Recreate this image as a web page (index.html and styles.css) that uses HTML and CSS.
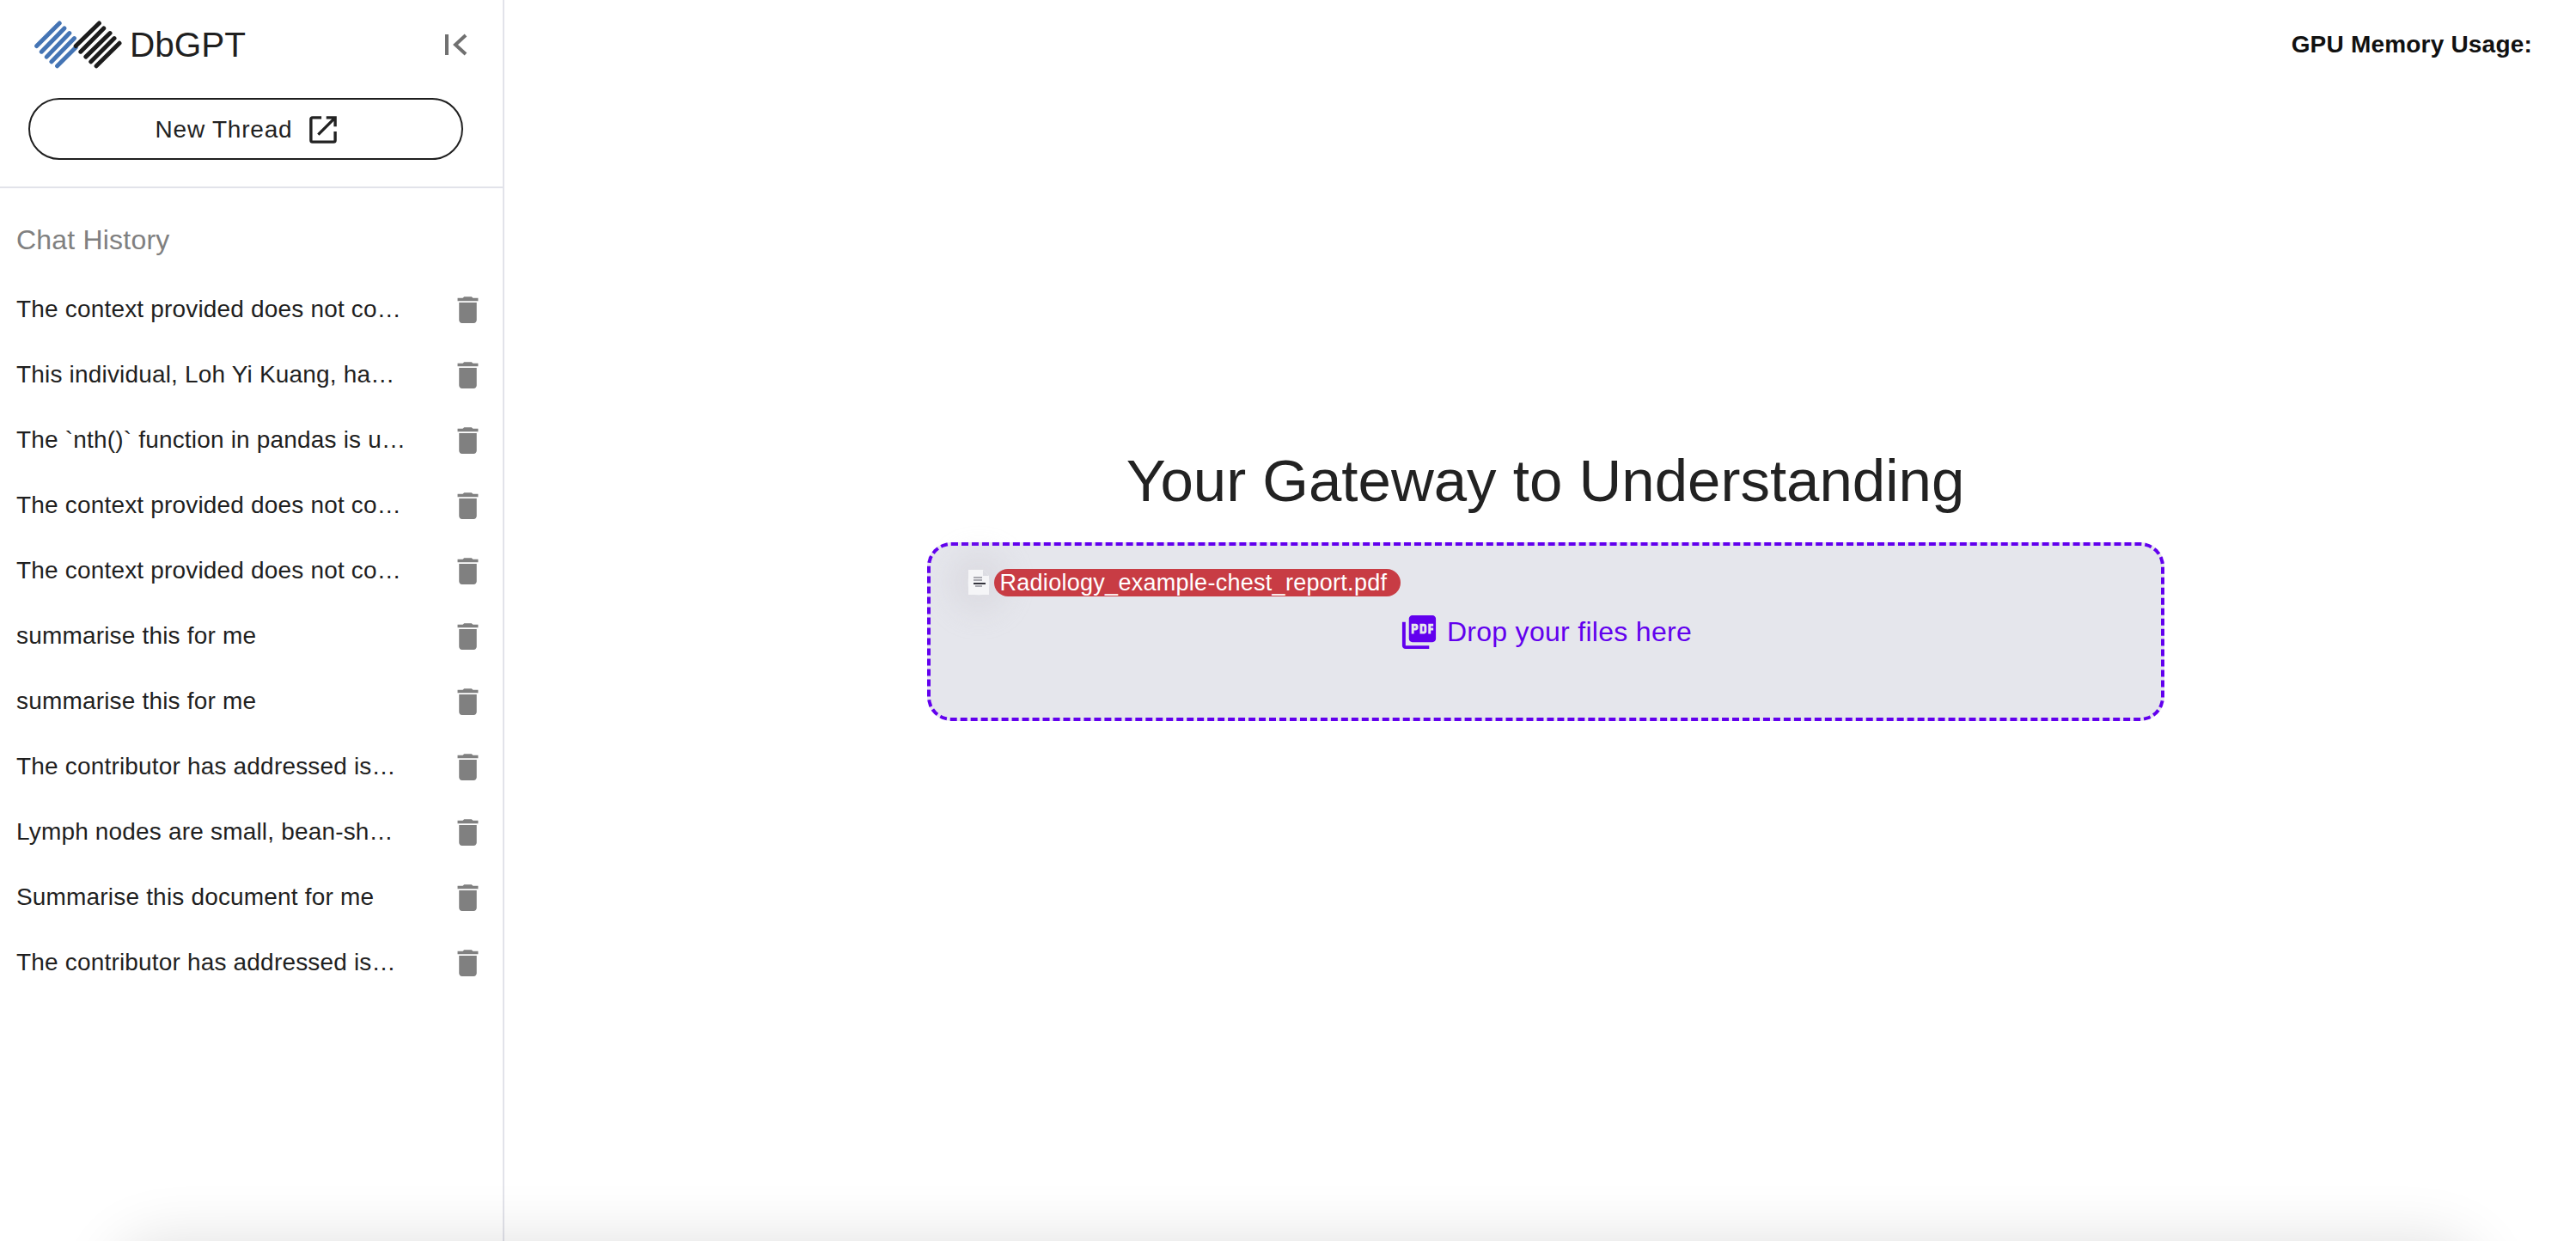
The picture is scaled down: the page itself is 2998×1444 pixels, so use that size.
FILE: index.html
```html
<!DOCTYPE html>
<html lang="en">
<head>
    <meta charset="UTF-8">
    <title>DbGPT</title>
    <link rel="stylesheet" href="styles.css">
</head>
<body>

<div class="app">
    <aside class="sidebar">
        <div class="brand-row">
            <div class="brand">
                <svg class="logo" viewBox="60 42 310 170">
                    <g class="logo-blue">
                        <path d="M68 130 148 50M85 150 165 68M103 168 183 85M120 185 200 103M140 200 205 135"/>
                    </g>
                    <g class="logo-black">
                        <path d="M205 130 287 50M222 150 303 68M240 168 325 85M258 185 340 103M277 200 358 120"/>
                    </g>
                </svg>
                <span class="brand-name">DbGPT</span>
            </div>
            <svg class="collapse" viewBox="0 0 30 30">
                <path d="M4 3v24" />
                <path d="M26 4 14 15l12 11" />
            </svg>
        </div>
        <div class="thread-wrap">
            <button class="new-thread">
                New Thread
                <svg class="thread-icon" viewBox="0 0 34 34">
                    <path d="M15 2H4a2 2 0 0 0-2 2v26a2 2 0 0 0 2 2h26a2 2 0 0 0 2-2V19" />
                    <path d="M11 23 32 2M21 2h11v11" />
                </svg>
            </button>
        </div>
        <h2 class="history-title">Chat History</h2>
        <ul class="history">
            <li><span>The context provided does not co…</span><svg viewBox="0 0 24 24"><path d="M6 19c0 1.1.9 2 2 2h8c1.1 0 2-.9 2-2V7H6v12zM19 4h-3.5l-1-1h-5l-1 1H5v2h14V4z"/></svg></li>
            <li><span>This individual, Loh Yi Kuang, ha…</span><svg viewBox="0 0 24 24"><path d="M6 19c0 1.1.9 2 2 2h8c1.1 0 2-.9 2-2V7H6v12zM19 4h-3.5l-1-1h-5l-1 1H5v2h14V4z"/></svg></li>
            <li><span>The `nth()` function in pandas is u…</span><svg viewBox="0 0 24 24"><path d="M6 19c0 1.1.9 2 2 2h8c1.1 0 2-.9 2-2V7H6v12zM19 4h-3.5l-1-1h-5l-1 1H5v2h14V4z"/></svg></li>
            <li><span>The context provided does not co…</span><svg viewBox="0 0 24 24"><path d="M6 19c0 1.1.9 2 2 2h8c1.1 0 2-.9 2-2V7H6v12zM19 4h-3.5l-1-1h-5l-1 1H5v2h14V4z"/></svg></li>
            <li><span>The context provided does not co…</span><svg viewBox="0 0 24 24"><path d="M6 19c0 1.1.9 2 2 2h8c1.1 0 2-.9 2-2V7H6v12zM19 4h-3.5l-1-1h-5l-1 1H5v2h14V4z"/></svg></li>
            <li><span>summarise this for me</span><svg viewBox="0 0 24 24"><path d="M6 19c0 1.1.9 2 2 2h8c1.1 0 2-.9 2-2V7H6v12zM19 4h-3.5l-1-1h-5l-1 1H5v2h14V4z"/></svg></li>
            <li><span>summarise this for me</span><svg viewBox="0 0 24 24"><path d="M6 19c0 1.1.9 2 2 2h8c1.1 0 2-.9 2-2V7H6v12zM19 4h-3.5l-1-1h-5l-1 1H5v2h14V4z"/></svg></li>
            <li><span>The contributor has addressed is…</span><svg viewBox="0 0 24 24"><path d="M6 19c0 1.1.9 2 2 2h8c1.1 0 2-.9 2-2V7H6v12zM19 4h-3.5l-1-1h-5l-1 1H5v2h14V4z"/></svg></li>
            <li><span>Lymph nodes are small, bean-sh…</span><svg viewBox="0 0 24 24"><path d="M6 19c0 1.1.9 2 2 2h8c1.1 0 2-.9 2-2V7H6v12zM19 4h-3.5l-1-1h-5l-1 1H5v2h14V4z"/></svg></li>
            <li><span>Summarise this document for me</span><svg viewBox="0 0 24 24"><path d="M6 19c0 1.1.9 2 2 2h8c1.1 0 2-.9 2-2V7H6v12zM19 4h-3.5l-1-1h-5l-1 1H5v2h14V4z"/></svg></li>
            <li><span>The contributor has addressed is…</span><svg viewBox="0 0 24 24"><path d="M6 19c0 1.1.9 2 2 2h8c1.1 0 2-.9 2-2V7H6v12zM19 4h-3.5l-1-1h-5l-1 1H5v2h14V4z"/></svg></li>
        </ul>
    </aside>

    <main class="main">
        <div class="gpu">GPU Memory Usage:</div>
        <div class="center">
            <h1 class="headline">Your Gateway to Understanding</h1>
            <div class="dropzone">
                <div class="file-row">
                    <div class="thumb">
                        <svg class="thumb-icon" viewBox="0 0 26 30">
                            <path class="sheet" d="M1 0h17l7 7v22H1z"/>
                            <path class="fold" d="M18 0v7h7z"/>
                            <path class="marks" d="M7 8h10v2H7zM7 11h10v2H7z"/>
                            <path class="marks-dark" d="M7 15h14v2H7z"/>
                            <path class="marks" d="M9 18h8v2H9z"/>
                        </svg>
                    </div>
                    <span class="file-pill">Radiology_example-chest_report.pdf</span>
                </div>
                <div class="drop-row">
                    <svg class="pdf-icon" viewBox="0 0 24 24"><path d="M20 2H8c-1.1 0-2 .9-2 2v12c0 1.1.9 2 2 2h12c1.1 0 2-.9 2-2V4c0-1.1-.9-2-2-2zm-8.5 7.5c0 .83-.67 1.5-1.5 1.5H9v2H7.5V7H10c.83 0 1.5.67 1.5 1.5v1zm5 2c0 .83-.67 1.5-1.5 1.5h-2.5V7H15c.83 0 1.5.67 1.5 1.5v3zm4-3H19v1h1.5V11H19v2h-1.5V7h3v1.5zM9 9.5h1v-1H9v1zM4 6H2v14c0 1.1.9 2 2 2h14v-2H4V6zm10 5.5h1v-3h-1v3z"/></svg>
                    <span>Drop your files here</span>
                </div>
            </div>
        </div>
    </main>
    <!-- chat input sits just under the fold, only its shadow shows -->
    <div class="bottom-shadow"></div>
</div>

</body>
</html>
```

FILE: styles.css
```css
/* reset */
*{margin: 0;padding: 0;box-sizing: border-box;list-style: none;}
html,body{height: 100%;overflow: hidden;background: #fff;}
body{font-family: "Liberation Sans", Arial, sans-serif;color: #1f1f1f;}

.app{display: flex;height: 1444px;position: relative;overflow: hidden;}

/* sidebar */
.sidebar{width: 587px;flex: none;border-right: 2px solid #e2e3ea;}
.brand-row{height: 104px;display: flex;align-items: center;justify-content: space-between;padding: 0 39px 0 40px;}
.brand{display: flex;align-items: center;gap: 8px;}
.logo{width: 103px;height: 57px;display: block;}
.logo path{fill: none;stroke-width: 15;stroke-linecap: round;}
.logo-blue path{stroke: #4474b4;}
.logo-black path{stroke: #1c1c1c;}
.brand-name{font-size: 40.5px;line-height: 1;color: #1f1f1f;}
.collapse{width: 30px;height: 30px;display: block;}
.collapse path{fill: none;stroke: #707070;stroke-width: 4;}

.thread-wrap{padding: 10px 46px 31px 33px;border-bottom: 2px solid #e2e3ea;}
.new-thread{width: 100%;height: 72px;padding-top: 2px;border: 2px solid #1f1f1f;border-radius: 36px;background: #fff;display: flex;align-items: center;justify-content: center;gap: 19px;font-family: inherit;font-size: 28px;letter-spacing: .8px;color: #222;}
.thread-icon{width: 32px;height: 32px;display: block;}
.thread-icon path{fill: none;stroke: #222;stroke-width: 3.6;}

.history-title{font-size: 32px;font-weight: 400;line-height: 40px;letter-spacing: .2px;color: #808080;padding: 40px 0 0 19px;}
.history{padding-top: 23px;}
.history li{height: 76px;display: flex;align-items: center;justify-content: space-between;padding: 0 20px 0 19px;font-size: 28px;letter-spacing: .18px;color: #1f1f1f;white-space: nowrap;}
.history svg{width: 41px;height: 41px;flex: none;fill: #808080;}

/* main area */
.main{flex: 1;display: flex;flex-direction: column;}
.gpu{height: 104px;line-height: 104px;text-align: right;padding-right: 51px;font-size: 28px;font-weight: 700;letter-spacing: .2px;color: #111;}
.center{padding-left: 12px;display: flex;flex-direction: column;align-items: center;padding-top: 410px;}
.headline{font-size: 69px;font-weight: 400;line-height: 92px;color: #222;margin-bottom: 25px;}
.dropzone{width: 1440px;height: 208px;border: 4px dashed #6200ee;border-radius: 28px;background: #e5e6ec;padding: 27px 43px 0;}

.file-row{display: flex;align-items: center;}
.thumb{width: 26px;height: 30px;margin-right: 5px;border-radius: 50%;box-shadow: 0 0 30px 22px rgba(200,196,206,.28);}
.thumb-icon{width: 26px;height: 30px;display: block;}
.sheet{fill: #f5f5f7;}
.fold{fill: #dcdce2;}
.marks{fill: #a9a9b0;}
.marks-dark{fill: #33333c;}
.file-pill{height: 32px;line-height: 32px;padding: 0 16px 0 7px;border-radius: 16px;background: #c83c44;color: #fff;font-size: 27px;letter-spacing: .28px;white-space: nowrap;}

.drop-row{display: flex;align-items: center;justify-content: center;gap: 9px;margin-top: 18px;color: #6200ee;font-size: 32px;letter-spacing: .3px;}
.pdf-icon{width: 47px;height: 47px;fill: #6200ee;display: block;}

/* shadow of the input box below the fold */
.bottom-shadow{position: absolute;left: 150px;right: 130px;top: 1462px;height: 80px;border-radius: 40px;box-shadow: 0 0 70px 20px rgba(0,0,0,.12);pointer-events: none;}
```
